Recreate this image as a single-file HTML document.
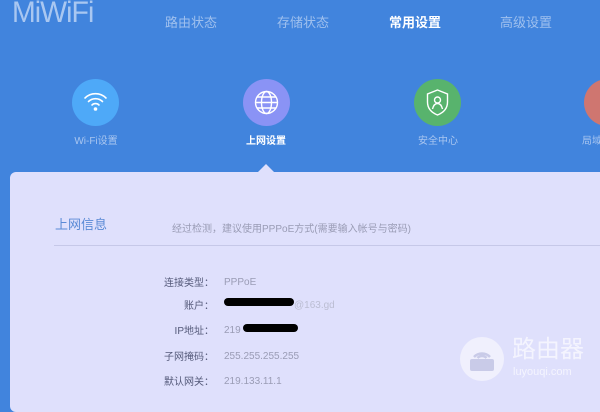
<!DOCTYPE html><html><head><meta charset="utf-8"><style>
body{margin:0;width:600px;height:400px;overflow:hidden;background:#4184dd;font-family:"Liberation Sans","Noto Sans CJK SC",sans-serif;position:relative}
.a{position:absolute;white-space:nowrap}
.nav{top:12px;font-size:13px;color:#9fc0ee}
.c{position:absolute;width:47px;height:47px;border-radius:50%;top:79px}
.lb{top:132px;font-size:10px;color:#a9c6f0;transform:translateX(-50%)}
.panel{position:absolute;left:10px;top:172px;width:600px;height:240px;background:#dfe0fc;border-radius:6px}
.k{font-size:10px;color:#555a7a;text-align:right;width:60px;left:154px;line-height:14px}
.v{font-size:10px;color:#9a9cb5;left:224px;line-height:14px}
</style></head><body>
<div class="a" style="left:12px;top:-4px;font-size:30px;color:#a9c7f1;font-weight:100;letter-spacing:-1px;transform:scaleX(0.95);transform-origin:left">MiWiFi</div>
<div class="a nav" style="left:165px">路由状态</div>
<div class="a nav" style="left:277px">存储状态</div>
<div class="a nav" style="left:389px;color:#fff;font-weight:bold">常用设置</div>
<div class="a nav" style="left:500px">高级设置</div>
<div class="c" style="left:72px;background:#4ea9f8"><svg width="47" height="47" viewBox="0 0 47 47" fill="none" stroke="#fff" stroke-width="1.6" stroke-linecap="round"><path d="M13 19a15 15 0 0 1 21 0M16.5 22.5a10 10 0 0 1 14 0M20 26a5 5 0 0 1 7 0"/><circle cx="23.5" cy="30" r="1" fill="#fff"/></svg></div>
<div class="c" style="left:243px;background:#8a93f5"><svg width="47" height="47" viewBox="0 0 47 47" fill="none" stroke="#fff" stroke-width="1.4"><circle cx="23.5" cy="23.5" r="11"/><ellipse cx="23.5" cy="23.5" rx="5" ry="11"/><path d="M12.5 23.5h22M14 18h19M14 29h19"/></svg></div>
<div class="c" style="left:414px;background:#58b36d"><svg width="47" height="47" viewBox="0 0 47 47" fill="none" stroke="#fff" stroke-width="1.4"><path d="M23.5 11l10 4v8c0 7-5 11-10 13c-5-2-10-6-10-13v-8z"/><circle cx="23.5" cy="21" r="3"/><path d="M18.5 30c1-4 3-5.5 5-5.5s4 1.5 5 5.5"/></svg></div>
<div class="c" style="left:584px;background:#cf7670"></div>
<div class="a lb" style="left:96px">Wi-Fi设置</div>
<div class="a lb" style="left:266px;color:#fff;font-weight:bold">上网设置</div>
<div class="a lb" style="left:438px">安全中心</div>
<div class="a lb" style="left:582px;transform:none">局域</div>
<div class="a" style="left:258px;top:164px;width:0;height:0;border-left:8px solid transparent;border-right:8px solid transparent;border-bottom:8px solid #dfe0fc"></div>
<div class="panel"></div>
<div class="a" style="left:55px;top:214px;font-size:13px;color:#5a8ad6">上网信息</div>
<div class="a" style="left:172px;top:220px;font-size:10px;color:#9a9cb5">经过检测，建议使用PPPoE方式(需要输入帐号与密码)</div>
<div class="a" style="left:54px;top:245px;width:546px;height:1px;background:#c6c8e8"></div>
<div class="a k" style="top:277px">连接类型：</div><div class="a v" style="top:276px">PPPoE</div>
<div class="a k" style="top:300px">账户：</div><div class="a" style="left:224px;top:298px;width:70px;height:8px;border-radius:4px;background:#000"></div><div class="a v" style="left:294px;top:299px;color:#bbbdd2">@163.gd</div>
<div class="a k" style="top:325px">IP地址：</div><div class="a v" style="top:324px">219</div><div class="a" style="left:243px;top:324px;width:55px;height:8px;border-radius:4px;background:#000"></div>
<div class="a k" style="top:351px">子网掩码：</div><div class="a v" style="top:350px">255.255.255.255</div>
<div class="a k" style="top:376px">默认网关：</div><div class="a v" style="top:375px">219.133.11.1</div>
<div class="a" style="left:460px;top:337px;width:44px;height:44px;border-radius:50%;background:#f0f0fd"><svg width="44" height="44" viewBox="0 0 44 44"><rect x="10" y="22" width="24" height="12" rx="2" fill="#c9cbe8"/><path d="M14 20a11 11 0 0 1 16 0M17.5 21a6 6 0 0 1 9 0" fill="none" stroke="#c9cbe8" stroke-width="2.5"/></svg></div>
<div class="a" style="left:512px;top:336px;font-size:24px;line-height:28px;color:#f4f4fe">路由器</div>
<div class="a" style="left:513px;top:366px;font-size:11px;color:#f4f4fe">luyouqi.com</div>
</body></html>
